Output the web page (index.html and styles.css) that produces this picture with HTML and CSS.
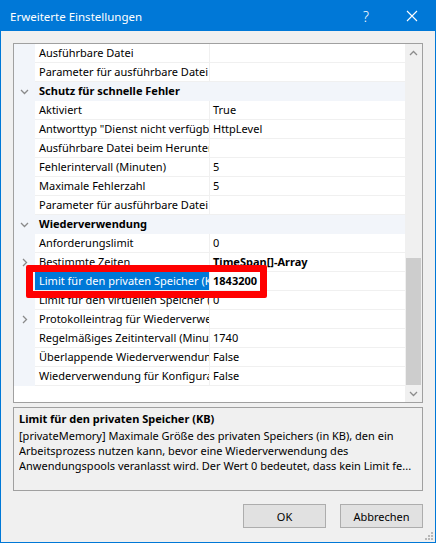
FILE: index.html
```html
<!DOCTYPE html>
<html lang="de">
<head>
<meta charset="utf-8">
<title>Erweiterte Einstellungen</title>
<link rel="stylesheet" href="styles.css">
</head>
<body>
<div class="window">
  <div class="titlebar">
    <span class="title">Erweiterte Einstellungen</span>
    <span class="tb-help">?</span>
    <span class="tb-close">
      <svg width="12" height="12" viewBox="0 0 12 12"><path d="M1 1 L11 11 M11 1 L1 11" stroke="#fff" stroke-width="1.1" fill="none"/></svg>
    </span>
  </div>
  <div class="content">
    <div class="propgrid">
      <div class="rows">
        <div class="row"><div class="gutter"></div><div class="name">Ausführbare Datei</div><div class="value"></div></div>
        <div class="row"><div class="gutter"></div><div class="name">Parameter für ausführbare Datei</div><div class="value"></div></div>
        <div class="row cat"><div class="gutter"><svg class="chev" width="9" height="6" viewBox="0 0 9 6"><path d="M1 1 L4.5 4.5 L8 1" stroke="#8a8a8a" stroke-width="1.3" fill="none"/></svg></div><div class="name">Schutz für schnelle Fehler</div></div>
        <div class="row"><div class="gutter"></div><div class="name">Aktiviert</div><div class="value">True</div></div>
        <div class="row"><div class="gutter"></div><div class="name">Antworttyp "Dienst nicht verfügbar"</div><div class="value">HttpLevel</div></div>
        <div class="row"><div class="gutter"></div><div class="name">Ausführbare Datei beim Herunterfahren</div><div class="value"></div></div>
        <div class="row"><div class="gutter"></div><div class="name">Fehlerintervall (Minuten)</div><div class="value">5</div></div>
        <div class="row"><div class="gutter"></div><div class="name">Maximale Fehlerzahl</div><div class="value">5</div></div>
        <div class="row"><div class="gutter"></div><div class="name">Parameter für ausführbare Datei</div><div class="value"></div></div>
        <div class="row cat"><div class="gutter"><svg class="chev" width="9" height="6" viewBox="0 0 9 6"><path d="M1 1 L4.5 4.5 L8 1" stroke="#8a8a8a" stroke-width="1.3" fill="none"/></svg></div><div class="name">Wiederverwendung</div></div>
        <div class="row"><div class="gutter"></div><div class="name">Anforderungslimit</div><div class="value">0</div></div>
        <div class="row"><div class="gutter"><svg class="chev" width="6" height="9" viewBox="0 0 6 9"><path d="M1 1 L4.5 4.5 L1 8" stroke="#8a8a8a" stroke-width="1.3" fill="none"/></svg></div><div class="name">Bestimmte Zeiten</div><div class="value bold">TimeSpan[]-Array</div></div>
        <div class="row selected"><div class="gutter"></div><div class="name">Limit für den privaten Speicher (KB)</div><div class="value bold">1843200</div></div>
        <div class="row"><div class="gutter"></div><div class="name">Limit für den virtuellen Speicher (KB)</div><div class="value">0</div></div>
        <div class="row"><div class="gutter"><svg class="chev" width="6" height="9" viewBox="0 0 6 9"><path d="M1 1 L4.5 4.5 L1 8" stroke="#8a8a8a" stroke-width="1.3" fill="none"/></svg></div><div class="name">Protokolleintrag für Wiederverwendung</div><div class="value"></div></div>
        <div class="row"><div class="gutter"></div><div class="name">Regelmäßiges Zeitintervall (Minuten)</div><div class="value">1740</div></div>
        <div class="row"><div class="gutter"></div><div class="name">Überlappende Wiederverwendung deaktiviert</div><div class="value">False</div></div>
        <div class="row"><div class="gutter"></div><div class="name">Wiederverwendung für Konfigurationsänderung deaktivieren</div><div class="value">False</div></div>
      </div>
      <div class="scrollbar">
        <div class="sb-btn"><svg width="9" height="6" viewBox="0 0 9 6"><path d="M1 5 L4.5 1.5 L8 5" stroke="#8c8c8c" stroke-width="1.3" fill="none"/></svg></div>
        <div class="sb-track">
          <div class="sb-thumb"></div>
        </div>
        <div class="sb-btn"><svg width="9" height="6" viewBox="0 0 9 6"><path d="M1 1 L4.5 4.5 L8 1" stroke="#8c8c8c" stroke-width="1.3" fill="none"/></svg></div>
      </div>
      <div class="highlight"></div>
    </div>
    <div class="desc">
      <div class="desc-title">Limit für den privaten Speicher (KB)</div>
      <div class="desc-line first">[privateMemory] Maximale Größe des privaten Speichers (in KB), den ein</div>
      <div class="desc-line">Arbeitsprozess nutzen kann, bevor eine Wiederverwendung des</div>
      <div class="desc-line">Anwendungspools veranlasst wird. Der Wert 0 bedeutet, dass kein Limit fe...</div>
    </div>
    <div class="buttons">
      <div class="btn">OK</div>
      <div class="btn">Abbrechen</div>
    </div>
  </div>
  <svg class="grip" width="10" height="10" viewBox="0 0 10 10">
    <rect x="7" y="1" width="2" height="2" fill="#b8b8b8"/>
    <rect x="4" y="4" width="2" height="2" fill="#b8b8b8"/>
    <rect x="7" y="4" width="2" height="2" fill="#b8b8b8"/>
    <rect x="1" y="7" width="2" height="2" fill="#b8b8b8"/>
    <rect x="4" y="7" width="2" height="2" fill="#b8b8b8"/>
    <rect x="7" y="7" width="2" height="2" fill="#b8b8b8"/>
  </svg>
</div>
</body>
</html>
```
FILE: styles.css
```css
html, body {
  margin: 0;
  padding: 0;
}
body {
  font-family: "Noto Sans", "Open Sans", sans-serif;
  font-size: 11px;
  color: #000;
}
.window {
  position: relative;
  width: 436px;
  height: 543px;
  box-sizing: border-box;
  border: 1px solid #0078d7;
  background: #f0f0f0;
  display: flex;
  flex-direction: column;
}
.titlebar {
  height: 30px;
  flex: none;
  background: #0078d7;
  color: #fff;
  display: flex;
  align-items: center;
  padding-left: 9px;
}
.title {
  flex: 1;
  font-size: 11.5px;
}
.tb-help {
  width: 46px;
  text-align: center;
  font-size: 14px;
  font-weight: 300;
  margin-right: 0;
}
.tb-close {
  width: 46px;
  display: flex;
  justify-content: center;
  align-items: center;
}
.content {
  flex: 1;
  padding: 12px 12px 0 12px;
  display: flex;
  flex-direction: column;
}
.propgrid {
  position: relative;
  height: 360px;
  box-sizing: border-box;
  border: 1px solid #a0a0a0;
  background: #fff;
  display: flex;
  flex: none;
}
.rows {
  flex: 1;
  display: flex;
  flex-direction: column;
  overflow: hidden;
}
.row {
  display: flex;
  height: 19px;
  flex: none;
  line-height: 18px;
}
.gutter {
  width: 21px;
  flex: none;
  background: #f2f5fa;
  display: flex;
  align-items: center;
  justify-content: center;
}
.name {
  width: 170px;
  flex: none;
  padding-left: 4px;
  white-space: nowrap;
  overflow: hidden;
  border-right: 1px solid #f0f0f0;
  border-bottom: 1px solid #f0f0f0;
}
.value {
  flex: 1;
  padding-left: 3px;
  white-space: nowrap;
  overflow: hidden;
  border-bottom: 1px solid #f0f0f0;
}
.bold {
  font-weight: bold;
}
.row.cat {
  background: #f2f5fa;
}
.row.cat .name {
  flex: 1;
  font-weight: bold;
  border-right: none;
  border-bottom: none;
}
.row.selected .name {
  background: #0078d7;
  color: #fff;
}
.chev {
  display: block;
}
.scrollbar {
  width: 17px;
  flex: none;
  background: #f0f0f0;
  display: flex;
  flex-direction: column;
}
.sb-btn {
  height: 17px;
  flex: none;
  display: flex;
  align-items: center;
  justify-content: center;
}
.sb-track {
  flex: 1;
  padding-top: 197px;
  padding-left: 1px;
  padding-right: 1px;
}
.sb-thumb {
  height: 127px;
  background: #cdcdcd;
}
.highlight {
  position: absolute;
  left: 12px;
  top: 221px;
  width: 227px;
  height: 19px;
  border: 7px solid #ff0000;
  border-radius: 2px;
}
.desc {
  margin-top: 4px;
  height: 84px;
  box-sizing: border-box;
  border: 1px solid #a0a0a0;
  padding: 3px 5px 0 5px;
  flex: none;
}
.desc-title {
  font-weight: bold;
  line-height: 15px;
  white-space: nowrap;
}
.desc-line {
  line-height: 15px;
  white-space: nowrap;
  overflow: hidden;
}
.desc-line.first {
  margin-top: 2px;
}
.buttons {
  display: flex;
  justify-content: flex-end;
  gap: 14px;
  margin-top: 13px;
  padding-right: 0;
}
.btn {
  width: 83px;
  height: 24px;
  box-sizing: border-box;
  background: #e1e1e1;
  border: 1px solid #adadad;
  display: flex;
  align-items: center;
  justify-content: center;
}
.grip {
  position: absolute;
  right: 1px;
  bottom: 1px;
}
```
